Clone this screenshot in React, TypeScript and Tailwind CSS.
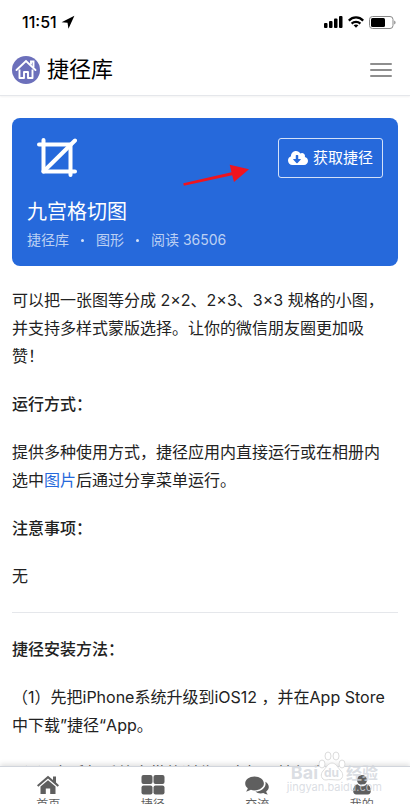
import React from 'react';
import { FaCloudDownloadAlt } from 'react-icons/fa';

const tabs = [
    { name: '首页', icon: HomeIcon },
    { name: '捷径', icon: GridIcon },
    { name: '交流', icon: ChatIcon },
    { name: '我的', icon: UserIcon },
];

function HomeIcon() {
    return (
        <svg viewBox="0 0 24 20" className="h-5 w-6 shrink-0" fill="currentColor" aria-hidden="true">
            <path d="M12 5.200 4.500 11.600V19h5.300v-5.500h4.400V19h5.300v-7.400z" />
            <path d="M12 .8 1 10.200l1.300 1.500L12 3.600l9.700 8.100 1.300-1.500-3-2.600V1.500h-3v3.600z" />
        </svg>
    );
}

function GridIcon() {
    return (
        <svg viewBox="0 0 24 20" className="h-5 w-6 shrink-0" fill="currentColor" aria-hidden="true">
            <rect x="0.500" y="0" width="11" height="9" rx="2" />
            <rect x="12.500" y="0" width="11" height="9" rx="2" />
            <rect x="0.500" y="10.500" width="11" height="9" rx="2" />
            <rect x="12.500" y="10.500" width="11" height="9" rx="2" />
        </svg>
    );
}

function ChatIcon() {
    return (
        <svg viewBox="0 0 24 20" className="h-5 w-6 shrink-0" fill="currentColor" aria-hidden="true">
            <path d="M9.500 1.500C4.300 1.500.2 4.600.2 8.500c0 1.900 1 3.600 2.600 4.800-.2 1.200-.9 2.200-1.800 3.100 1.900-.1 3.600-.7 4.900-1.600 1.100.4 2.300.6 3.600.6 5.200 0 9.400-3.100 9.400-6.900s-4.200-7-9.400-7z" />
            <path d="M20.300 6.700c.2.600.3 1.200.3 1.800 0 4.500-4.600 8-10.200 8.100 1.300 1.200 3.200 1.900 5.300 1.900.9 0 1.800-.1 2.600-.4 1.200.8 2.700 1.300 4.500 1.400-.9-.9-1.500-1.900-1.600-3 1.600-1.100 2.600-2.700 2.600-4.500 0-2.200-1.300-4.100-3.500-5.300z" />
        </svg>
    );
}

function UserIcon() {
    return (
        <svg viewBox="0 0 24 20" className="h-5 w-6 shrink-0" fill="currentColor" aria-hidden="true">
            <circle cx="12" cy="5" r="5" />
            <path d="M7.500 9.200C9 10.800 10.400 11.300 12 11.300s3-.5 4.500-2.100C19.500 9.800 20.800 12.500 20.800 16c0 2.200-1.200 3.500-3 3.500H6.200c-1.800 0-3-1.300-3-3.500 0-3.500 1.300-6.200 4.300-6.800z" />
        </svg>
    );
}

const StatusBar: React.FC = () => (
    <div className="flex h-11 items-center justify-between pl-[22px] pr-[14px] text-black">
        <div className="flex items-center gap-1">
            <span className="text-base font-medium">11:51</span>
            <svg viewBox="0 0 12 12" className="h-[14px] w-[14px]" fill="currentColor">
                <path d="M11.500.7.500 6.200l5.100.5.800 5z" />
            </svg>
        </div>
        <div className="flex items-center gap-[5px]">
            <svg viewBox="0 0 19 12" className="h-3 w-[19px]" fill="currentColor">
                <rect x="0" y="7" width="3.500" height="5" rx="1" />
                <rect x="5" y="5" width="3.500" height="7" rx="1" />
                <rect x="10" y="2.500" width="3.500" height="9.500" rx="1" />
                <rect x="15" y="0" width="3.500" height="12" rx="1" />
            </svg>
            <svg viewBox="0 0 16 12" className="h-3 w-4" fill="none" stroke="currentColor" strokeWidth="2.200">
                <path d="M.8 4.600C5 .4 11 .4 15.200 4.600" />
                <path d="M3.600 7.600c2.500-2.400 6.300-2.400 8.800 0" />
                <path d="M5.600 9.300 8 11.800l2.400-2.500c-1.400-1.200-3.400-1.200-4.800 0z" fill="currentColor" stroke="none" />
            </svg>
            <svg viewBox="0 0 27 13" className="h-[13px] w-[27px]">
                <rect x="0.500" y="0.500" width="23.500" height="12" rx="3" fill="none" stroke="#888" />
                <rect x="2" y="2" width="14" height="9" rx="1.500" fill="#000" />
                <path d="M25.300 4.500c1.600.8 1.600 3.200 0 4z" fill="#777" />
            </svg>
        </div>
    </div>
);

const Header: React.FC = () => (
    <header className="relative z-10 shrink-0 border-b border-gray-200 bg-white shadow-xs">
        <StatusBar />
        <div className="flex h-[51px] items-center justify-between pl-3 pr-[18px]">
            <a href="#" className="flex items-center gap-[7px] text-black">
                <svg viewBox="0 0 28 28" className="h-7 w-7" fill="none" stroke="#fff" strokeWidth="1.900">
                    <circle cx="14" cy="14" r="14" fill="#6c70bb" stroke="none" />
                    <path d="M4.500 14 14 5l9.500 9" strokeLinecap="round" />
                    <path d="M19 8.500V5.500h2.500v6" />
                    <path d="M7.500 13.500V22h4.500v-6h4v6h4.500v-8.500" strokeLinejoin="round" />
                </svg>
                <span className="text-[22px]">捷径库</span>
            </a>
            <button aria-label="菜单" className="flex w-[22px] flex-col gap-1">
                <span className="h-[2px] rounded bg-[#8e8e8e]" />
                <span className="h-[2px] rounded bg-[#8e8e8e]" />
                <span className="h-[2px] rounded bg-[#8e8e8e]" />
            </button>
        </div>
    </header>
);

const ShortcutCard: React.FC = () => (
    <section className="relative rounded-lg bg-[#2669db] px-[15px] pb-4 pt-5 text-white">
        <div className="flex items-start justify-between">
            <svg viewBox="0 0 40 40" className="ml-[10px] h-10 w-10" fill="none" stroke="#fff" strokeWidth="4" strokeLinecap="round" strokeLinejoin="round">
                <path d="M2 6.500h31.500V37" />
                <path d="M6.500 2v31.500H38" />
                <path d="M6.500 33.500 38 2.500" />
            </svg>
            <button className="flex h-10 items-center gap-[5px] rounded-[3px] border border-white/80 px-[9px] text-[15px]">
                <FaCloudDownloadAlt className="h-5 w-5" />
                获取捷径
            </button>
        </div>
        <h1 className="mt-5 text-xl leading-7">九宫格切图</h1>
        <div className="mt-1 flex items-center gap-3 text-sm leading-5 text-white/70">
            <span>捷径库</span>
            <span className="h-[3px] w-[3px] rounded-full bg-white/80" />
            <span>图形</span>
            <span className="h-[3px] w-[3px] rounded-full bg-white/80" />
            <span>阅读 36506</span>
        </div>
        {/* Pointer towards the download button */}
        <svg viewBox="0 0 68 22" className="absolute left-[170px] top-[46px] h-[22px] w-[68px]" fill="#f0141e">
            <path d="M1.300 19.200 49.500 8.300 47.700.8 67 5.300 52 18l-1.800-6.700L1.800 21.800z" />
        </svg>
    </section>
);

const Article: React.FC = () => (
    <article className="mt-5 flex flex-col gap-5 whitespace-nowrap text-base leading-7 text-[#222]">
        <p>
            可以把一张图等分成 2×2、2×3、3×3 规格的小图，
            <br />
            并支持多样式蒙版选择。让你的微信朋友圈更加吸
            <br />
            赞！
        </p>
        <h2 className="font-medium">运行方式：</h2>
        <p>
            提供多种使用方式，捷径应用内直接运行或在相册内
            <br />
            选中<a href="#" className="text-[#2669db]">图片</a>后通过分享菜单运行。
        </p>
        <h2 className="font-medium">注意事项：</h2>
        <p>无</p>
        <hr className="my-[2px] border-gray-200" />
        <h2 className="font-medium">捷径安装方法：</h2>
        <p>
            （1）先把iPhone系统升级到iOS12 ，并在App Store
            <br />
            中下载”捷径“App。
        </p>
        <p>（2）在手机系统自带的浏览器内打开捷径库</p>
    </article>
);

const Watermark: React.FC = () => (
    <div className="pointer-events-none absolute right-[28px] top-[-16px] flex flex-col text-gray-300/80">
        <div className="flex h-[30px] items-end justify-center font-bold leading-4">
            <span className="text-lg leading-4">Bai</span>
            <span className="relative">
                <svg viewBox="0 0 28 30" className="h-[30px] w-7" fill="#fff" stroke="#dcdcdc">
                    <ellipse cx="4" cy="13" rx="3" ry="4" />
                    <ellipse cx="10" cy="5" rx="3" ry="4" />
                    <ellipse cx="18" cy="5" rx="3" ry="4" />
                    <ellipse cx="24" cy="13" rx="3" ry="4" />
                    <path d="M14 12c4 0 6 5 9 8s2 9-3 9c-3 0-9-1-12 0-5 0-6-6-3-9s5-8 9-8z" />
                </svg>
                <span className="absolute bottom-0 left-[6px] text-xs leading-4">du</span>
            </span>
            <span className="text-base leading-4">经验</span>
        </div>
        <span className="text-[11px] leading-3">jingyan.baidu.com</span>
    </div>
);

const TabBar: React.FC = () => (
    <nav className="relative z-10 h-[38px] shrink-0 border-t border-gray-300 bg-white text-[#5f5f5f] shadow-[0_-2px_5px_rgba(0,0,0,0.12)]">
        <div className="h-full overflow-hidden">
            <div className="-mx-1 flex">
                {tabs.map(({ name, icon: Icon }) => (
                    <a key={name} href="#" className="flex flex-1 flex-col items-center pt-2 text-xs leading-5">
                        <Icon />
                        <span>{name}</span>
                    </a>
                ))}
            </div>
        </div>
        <Watermark />
    </nav>
);

export default function App() {
    return (
        <div className="flex h-screen flex-col bg-white font-['Inter','Noto_Sans_CJK_SC',sans-serif]">
            <Header />
            <main className="min-h-0 flex-1 overflow-hidden px-3 pt-[22px]">
                <ShortcutCard />
                <Article />
            </main>
            <TabBar />
        </div>
    );
}
